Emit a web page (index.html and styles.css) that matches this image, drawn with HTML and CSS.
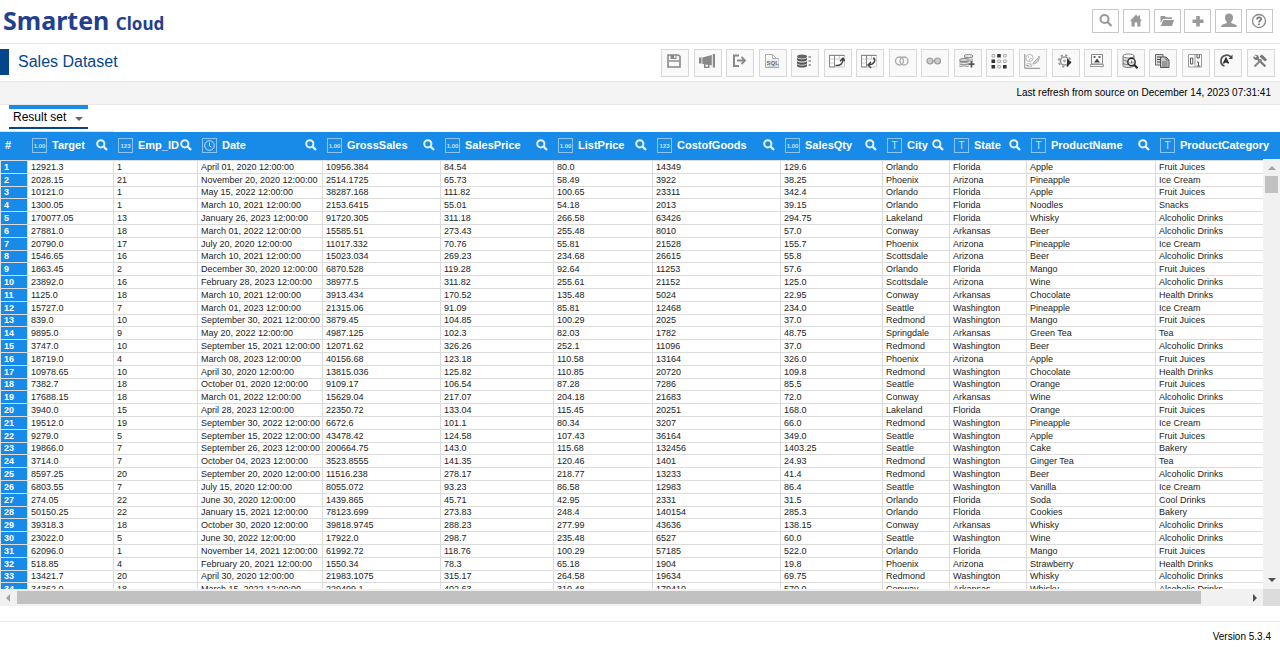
FILE: index.html
```html
<!DOCTYPE html>
<html lang="en">
<head>
    <meta charset="UTF-8">
    <meta name="viewport" content="width=device-width, initial-scale=1.0">
    <title>Smarten Cloud - Sales Dataset</title>
    <link rel="stylesheet" href="styles.css">
</head>
<body>
    <header class="topbar">
        <a class="logo" href="#">Smarten <span>Cloud</span></a>
        <nav class="mainNav">
            <button title="Search"><svg viewBox="0 0 16 16"><circle cx="6.5" cy="6" r="4" fill="none" stroke="#999" stroke-width="2"/><path d="M9.5 9l4 4" stroke="#999" stroke-width="2.4"/></svg></button>
            <button title="Home"><svg viewBox="0 0 16 16"><path fill="#999" d="M8 1.500L2 8h1.500v5.500h3.200V9.500h2.600v4h3.200V8H14l-2-2.200V2.500h-1.800v1.400z"/></svg></button>
            <button title="Open"><svg viewBox="0 0 16 16"><path fill="#999" d="M1.500 6V3h4.500l1 1.200h6V6H4L1.500 10zM4.300 7H15l-2 6H1.800z"/></svg></button>
            <button title="New"><svg viewBox="0 0 16 16"><path fill="#999" d="M6.200 3h3.600v3.500H13.500V10H9.800v3.500H6.200V10H2.500V6.500h3.700z"/></svg></button>
            <button title="User"><svg viewBox="0 0 16 16"><path fill="#999" d="M8 .5c2.600 0 4.200 1.700 4 4.400-.1 1.700-.9 3-1.800 3.900v1.300l4 1.300c1.100.4 1.600 1 1.600 2.600H.2c0-1.600.5-2.200 1.600-2.600l4-1.300V8.800C4.900 7.900 4.100 6.600 4 4.900 3.800 2.200 5.400.5 8 .5z"/></svg></button>
            <button title="Help"><svg viewBox="0 0 16 16"><circle cx="8" cy="8" r="6.500" fill="none" stroke="#888" stroke-width="1.300"/><path d="M6 6.400c0-2.800 4.200-2.600 4.200-.3C10.200 7.500 8 7.500 8 9.400" fill="none" stroke="#777" stroke-width="1.700"/><path d="M7.100 10.500h1.800v1.600H7.100z" fill="#777"/></svg></button>
        </nav>
    </header>

    <div class="titlebar">
        <h1>Sales Dataset</h1>
        <div class="toolbar">
            <button title="Save"><svg viewBox="0 0 16 16"><path d="M2 2h10.500L14 3.500V14H2z" fill="none" stroke="#888" stroke-width="1.600"/><path d="M4.500 2h6v4h-6z" fill="#888"/><path d="M8 2.800h1.500v2H8z" fill="#fff"/><path d="M3 8h10" stroke="#888" stroke-width="1.400"/></svg></button>
            <button title="Publish"><svg viewBox="0 0 16 16"><path fill="#888" d="M0 4.500h2.500v6H0zM3.300 4.500L12.800 2v10.500l-2.300-.6V15H5v-3.800l-1.700-.5zM13.800 1H16v13.500h-2.200z"/><path d="M6.500 11.500v2H9v-1.600z" fill="#fff"/></svg></button>
            <button title="Export"><svg viewBox="0 0 16 16"><path d="M8 2.500H3v10.500h5" fill="none" stroke="#888" stroke-width="2"/><path d="M6 7.500h7" stroke="#888" stroke-width="2"/><path d="M10.500 4L14 7.500 10.500 11" fill="none" stroke="#888" stroke-width="1.800"/></svg></button>
            <button title="SQL"><svg viewBox="0 0 16 16"><path d="M1.500 14.500V1.500H8.500l4 4h2v9z" fill="#fff" stroke="#aaa"/><path d="M8.500 1.500v4h4M2.500 13h11" fill="none" stroke="#aaa"/><path d="M2.500 6h12v6.500h-12z" fill="#eee"/><text x="2.500" y="11.500" font-size="6" font-weight="bold" fill="#666">SQL</text></svg></button>
            <button title="Data"><svg viewBox="0 0 16 16"><ellipse cx="6" cy="3.500" rx="5" ry="2" fill="#666"/><path d="M1 4.700c1.500 2 8.500 2 10 0v2.400c-1.500 2-8.500 2-10 0zM1 8c1.500 2 8.500 2 10 0v2.200c-1.500 2-8.500 2-10 0zM1 11c1.500 2 8.500 2 10 0v2c-1.500 2-8.500 2-10 0z" fill="#555"/><path d="M12.500 4H15M12.500 8H15M12.500 12H15" stroke="#888" stroke-width="1.600"/></svg></button>
            <button title="Pivot"><svg viewBox="0 0 16 16"><path d="M.5 2h15v12H.5zM.5 6h15M.5 10h5M5.500 2v12M10.500 2v4" fill="#fff" stroke="#ccc"/><path d="M.5 2.500h15M5.500 2v12H.5V2" fill="none" stroke="#888"/><path d="M6.500 12.500c5 .5 7.500-2 7.500-6.500M11 8.200l3-3 2 3" fill="none" stroke="#444" stroke-width="1.500"/></svg></button>
            <button title="Unpivot"><svg viewBox="0 0 16 16"><path d="M.5 2h15v12H.5zM.5 6h15M.5 10h5M5.500 2v12M10.500 2v4" fill="#fff" stroke="#ccc"/><path d="M.5 2.500h15M5.500 2v12H.5V2" fill="none" stroke="#888"/><path d="M12.500 4.500c2.500 3 1 7-5 7.500M10 9l-3 3 3 3" fill="none" stroke="#444" stroke-width="1.500"/></svg></button>
            <button title="Join"><svg viewBox="0 0 16 16"><circle cx="5.500" cy="8" r="4" fill="none" stroke="#aaa" stroke-width="1.300"/><circle cx="10" cy="8" r="4" fill="none" stroke="#aaa" stroke-width="1.300"/></svg></button>
            <button title="Union"><svg viewBox="0 0 16 16"><circle cx="4" cy="8" r="3" fill="#ccc" stroke="#999" stroke-width="1.200"/><circle cx="11.500" cy="8" r="3" fill="#ccc" stroke="#999" stroke-width="1.200"/><path d="M7 8h1.500" stroke="#999" stroke-width="1.200"/></svg></button>
            <button title="Add data"><svg viewBox="0 0 16 16"><path d="M5 3v6h9V3z" fill="#bbb"/><path d="M.5 6.500v7.500h9V6.500z" fill="#999"/><ellipse cx="9.500" cy="3" rx="4.500" ry="1.500" fill="#eee" stroke="#888"/><ellipse cx="5" cy="7" rx="4.400" ry="1.400" fill="#eee" stroke="#777"/><path d="M.5 9.500c2 1.400 7 1.400 9 0M.5 12c2 1.400 7 1.400 9 0M10 6c2 0 3-.3 4-1" fill="none" stroke="#eee"/><path d="M12.500 8v6.500M9.500 11.200h6" stroke="#555" stroke-width="1.800"/></svg></button>
            <button title="Matrix"><svg viewBox="0 0 16 16"><path d="M6.200 1h3.600v3.400H6.200zM.5 6.500h3.600v3.400H.5zM.5 12h3.600v3.400H.5zM12 12h3.600v3.400H12z" fill="#333"/><path d="M1 1.500h2.700v2.500H1zM12.500 1.500h2.700v2.500h-2.700zM6.700 7h2.700v2.500H6.700zM12.500 7h2.700v2.500h-2.700zM6.700 12.500h2.700V15H6.700z" fill="none" stroke="#aaa"/></svg></button>
            <button title="Clusters"><svg viewBox="0 0 16 16"><path d="M.8 1v14.300H16" fill="none" stroke="#888"/><circle cx="5.500" cy="5" r="3.600" fill="none" stroke="#bbb"/><path d="M4 4h1M6.500 5.500h1M5 7h1M3 12.500h1.500M5.500 11H7M6.500 13H8" stroke="#888"/><ellipse cx="5" cy="12" rx="3" ry="1.700" fill="none" stroke="#ccc"/><path d="M9 11c0-2 2-2.500 3-4s3-2 3-4c1 4-2 8-6 8z" fill="#ccc" stroke="#aaa"/></svg></button>
            <button title="Process"><svg viewBox="0 0 16 16"><circle cx="7.500" cy="8" r="5.800" fill="none" stroke="#999" stroke-width="1.800" stroke-dasharray="2.300 2.250"/><circle cx="7.500" cy="8" r="4" fill="none" stroke="#999" stroke-width="1.600"/><circle cx="7.500" cy="8" r="1.400" fill="#aaa"/><path d="M10 5.500l4.500 4-4.500 4.500z" fill="#333"/></svg></button>
            <button title="Preview"><svg viewBox="0 0 16 16"><path d="M2.500 1.500h11v9.500h-11z" fill="#fff" stroke="#888"/><path d="M1.500 11.500h13v2h-13z" fill="#fff" stroke="#999"/><path d="M5 9.500l3-4 3 4z" fill="#444"/><path d="M4.500 3h2v2h-2zM9.500 3h2v2h-2z" fill="#666"/></svg></button>
            <button title="Search data"><svg viewBox="0 0 16 16"><path d="M1 3v10c1 2 9 2 11 0V3z" fill="#ddd" stroke="#777"/><ellipse cx="6.500" cy="3" rx="5.500" ry="2" fill="#fff" stroke="#777"/><path d="M1 6.500c1 1.500 5 2 8 1.200M1 10c1 1.500 3 1.500 5 1.500" fill="none" stroke="#777"/><circle cx="9.500" cy="9" r="3.700" fill="#fff" stroke="#222" stroke-width="1.400"/><path d="M12.200 11.700l3.300 3.500" stroke="#222" stroke-width="2"/><path d="M8 10.500V9M9.500 10.500v-3M11 10.500V8.500" stroke="#777"/></svg></button>
            <button title="Copy"><svg viewBox="0 0 16 16"><path d="M1.500 1.500H9V12H1.500z" fill="#ddd" stroke="#666"/><path d="M3 4h4M3 6.500h3M3 9h3" stroke="#444"/><path d="M6.500 4h5.500l3 3v7.500H6.500z" fill="#ccc" stroke="#555"/><path d="M12 4v3h3M8 9h5.500M8 11h5.500M8 13h5.500" fill="none" stroke="#666"/></svg></button>
            <button title="Binary"><svg viewBox="0 0 16 16"><path d="M1.500 1.500h13v12.500h-13zM8 1.500V14" fill="#fff" stroke="#999"/><path d="M3.500 5h2.300v6H3.500z" fill="none" stroke="#555"/><path d="M10 1.500V5h2.300V1.500M10 9h1.500v4M9.800 13h3.400" fill="none" stroke="#555"/></svg></button>
            <button title="Refresh"><svg viewBox="0 0 16 16"><path d="M5.500 13C.5 11.500.8 3.500 6.500 2.300c2.500-.4 4 .2 5.300 1.600" fill="none" stroke="#555" stroke-width="1.800"/><path d="M9.500 6H13.500V1.500z" fill="#444"/><path d="M4.500 10.500L7 5.500l2.500 5M5.500 9h3" fill="none" stroke="#222" stroke-width="1.600"/></svg></button>
            <button title="Settings"><svg viewBox="0 0 16 16"><path d="M4.500 4.500l8.800 9" stroke="#777" stroke-width="2.200"/><path d="M2.500 13.500l7-7" stroke="#888" stroke-width="2.200"/><path d="M2 2c2-1 5 0 5 3L4.500 7C2 7 1 5 1.500 3l2 1.500 1-.5V3z" fill="#777"/><path d="M7.500 3.500L10 1.500l5 5L13 8.500z" fill="#777"/></svg></button>
        </div>
    </div>

    <div class="refreshBar">Last refresh from source on December 14, 2023 07:31:41</div>

    <div class="tabs">
        <button class="tab">Result set <span class="caret"></span></button>
    </div>

    <main class="grid">
        <table>
            <colgroup>
                <col class="colNum"><col class="colTarget"><col class="colEmp"><col class="colDate">
                <col class="colGross"><col class="colPrice"><col class="colList"><col class="colCost">
                <col class="colQty"><col class="colCity"><col class="colState"><col class="colName"><col>
            </colgroup>
            <thead><tr id="headRow"><th>#</th></tr></thead>
            <tbody id="rows"></tbody>
        </table>
        <div class="vScroll">
            <span class="arrowUp"></span>
            <span class="vThumb"></span>
            <span class="arrowDown"></span>
        </div>
    </main>
    <div class="hScroll">
        <span class="arrowLeft"></span>
        <span class="hTrack"><span class="hThumb"></span></span>
        <span class="arrowRight"></span>
        <span class="corner"></span>
    </div>

    <footer>Version 5.3.4</footer>
    <script src="script.js"></script>
</body>
</html>
```
FILE: styles.css
```css
*{
    box-sizing: border-box;
}
body{
    margin: 0px;
    height: 100vh;
    display: flex;
    flex-direction: column;
    overflow: hidden;
    background-color: white;
    color: black;
    font-family: "Liberation Sans", Arial, sans-serif;
    font-size: 10px;
}
button{
    font-family: inherit;
    padding: 0px;
    cursor: pointer;
}
.topbar{
    display: flex;
    justify-content: space-between;
    height: 44px;
    flex: none;
    padding: 0px 7px 0px 3px;
    border-bottom: 1px solid #e8e8e8;
}
.logo{
    color: #23408f;
    font-family: "Noto Sans", "Open Sans", sans-serif;
    font-size: 25px;
    font-weight: 700;
    line-height: 41px;
    text-decoration: none;
}
.logo span{
    font-size: 17px;
}
.mainNav{
    display: flex;
    justify-content: space-between;
    width: 181px;
    padding-top: 9px;
}
.mainNav button{
    width: 27px;
    height: 24px;
    background-color: white;
    border: 1px solid #c8c8c8;
}
.mainNav svg{
    display: block;
    width: 16px;
    height: 16px;
    margin: 0px auto;
}
.titlebar{
    display: flex;
    justify-content: space-between;
    flex: none;
    height: 38px;
    padding: 5px 5px 0px 0px;
    border-bottom: 1px solid #e8e8e8;
}
h1{
    margin: 0px;
    height: 26px;
    padding-left: 9px;
    border-left: 9px solid #04468c;
    color: #04468c;
    font-size: 16px;
    font-weight: normal;
    line-height: 25px;
}
.toolbar{
    display: flex;
    justify-content: space-between;
    width: 614px;
}
.toolbar button{
    width: 28px;
    height: 28px;
    padding: 0px 2px 4px 0px;
    background-color: #f9f9f9;
    border: 1px solid #d8d8d8;
}
.toolbar svg{
    display: block;
    width: 16px;
    height: 16px;
    margin: 0px auto;
}
.refreshBar{
    flex: none;
    height: 23px;
    padding-right: 9px;
    background-color: #f4f4f4;
    border-bottom: 1px solid #e8e8e8;
    line-height: 22px;
    text-align: right;
}
.tabs{
    flex: none;
    width: 114px;
    height: 27px;
    padding-left: 9px;
    border-bottom: 1px solid #e0e0e0;
}
.tab{
    display: flex;
    align-items: center;
    width: 79px;
    height: 24px;
    padding: 0px 4px 2px;
    background-color: white;
    border: none;
    border-top: 4px solid #188ae8;
    border-bottom: 2px solid #04468c;
    font-size: 12px;
    color: black;
}
.caret{
    margin: 4px 0px 0px 9px;
    border: 4px solid transparent;
    border-top: 4px solid #666;
    border-bottom: none;
}
.grid{
    position: relative;
    flex: 1;
    min-height: 0px;
    overflow: hidden;
}
table{
    width: 100%;
    table-layout: fixed;
    border-collapse: separate;
    border-spacing: 0px;
}
.colNum{ width: 27px; }
.colTarget{ width: 86px; }
.colEmp{ width: 84px; }
.colDate{ width: 125px; }
.colGross{ width: 118px; }
.colPrice{ width: 113px; }
.colList{ width: 99px; }
.colCost{ width: 128px; }
.colQty{ width: 102px; }
.colCity{ width: 67px; }
.colState{ width: 77px; }
.colName{ width: 129px; }
thead th{
    height: 29px;
    padding: 0px 5px 2px;
    background-color: #188ae8;
    border-bottom: 1px solid #dcdcdc;
    color: white;
    font-size: 11px;
    text-align: left;
}
.headCell{
    display: flex;
    align-items: center;
}
.type{
    flex: none;
    width: 15px;
    height: 15px;
    margin-right: 5px;
    border: 1px solid #8cc4f4;
    color: #c8e4fc;
    font-size: 6px;
    line-height: 14px;
    text-align: center;
}
.typeText{
    font-size: 10px;
    font-weight: normal;
}
.type svg{
    display: block;
    width: 13px;
    height: 13px;
}
.find{
    margin-left: auto;
    background: none;
    border: none;
}
.find svg{
    display: block;
    width: 12px;
    height: 12px;
}
tbody th, tbody td{
    height: 13px;
    padding: 0px 0px 0px 3px;
    border-bottom: 1px solid #dcdcdc;
    border-left: 1px solid #dcdcdc;
    color: #222;
    font-size: 9px;
    line-height: 11px;
    text-align: left;
    white-space: nowrap;
}
/* every fifth row is one pixel shorter */
tbody tr:nth-child(5n+3) > *{
    height: 12px;
}
tbody th{
    background-color: #188ae8;
    color: white;
}
.vScroll{
    position: absolute;
    top: 27px;
    right: 0px;
    bottom: 0px;
    width: 17px;
    display: flex;
    flex-direction: column;
    align-items: center;
    background-color: #f1f1f1;
}
.vThumb{
    width: 13px;
    height: 17px;
    background-color: #c1c1c1;
}
.arrowUp, .arrowDown{
    border: 4px solid transparent;
}
.arrowUp{
    margin: 3px 0px 6px;
    border-bottom-color: #a3a3a3;
}
.arrowDown{
    margin: auto 0px 3px;
    border-top-color: #505050;
}
.hScroll{
    display: flex;
    align-items: center;
    flex: none;
    height: 17px;
    background-color: #f1f1f1;
}
.arrowLeft, .arrowRight{
    border: 4px solid transparent;
}
.arrowLeft{
    margin: 0px 7px 0px 2px;
    border-right-color: #a3a3a3;
}
.arrowRight{
    margin: 0px 2px 0px 7px;
    border-left-color: #505050;
}
.hTrack{
    flex: 1;
    height: 13px;
    padding-right: 45px;
}
.hThumb{
    display: block;
    height: 13px;
    background-color: #c1c1c1;
}
.corner{
    width: 17px;
    height: 17px;
    background-color: #dcdcdc;
}
footer{
    flex: none;
    height: 26px;
    margin-top: 15px;
    padding-right: 9px;
    border-top: 1px solid #e8e8e8;
    line-height: 30px;
    text-align: right;
}
```
FILE: script.js
```js
const headRow = document.getElementById("headRow")
const rows = document.getElementById("rows")

const columns = [
    ["Target", "1.00"], ["Emp_ID", "123"], ["Date", "date"], ["GrossSales", "1.00"],
    ["SalesPrice", "1.00"], ["ListPrice", "1.00"], ["CostofGoods", "123"], ["SalesQty", "1.00"],
    ["City", "T"], ["State", "T"], ["ProductName", "T"], ["ProductCategory", "T"]
]
const clock = `<svg viewBox="0 0 13 13"><circle cx="6.5" cy="6.5" r="4.8" fill="none" stroke="#c8e4fc"/><path d="M6.500 3.500v3.500l2 1" fill="none" stroke="#c8e4fc"/></svg>`
const glass = `<svg viewBox="0 0 12 12"><circle cx="4.800" cy="4.800" r="3.600" fill="none" stroke="#e4f2fe" stroke-width="2"/><path d="M7.500 7.500l3.500 3.500" stroke="#e4f2fe" stroke-width="2.400"/></svg>`

const data = `12921.3|1|April 01, 2020|10956.384|84.54|80.0|14349|129.6|Orlando|Florida|Apple|Fruit Juices
2028.15|21|November 20, 2020|2514.1725|65.73|58.49|3922|38.25|Phoenix|Arizona|Pineapple|Ice Cream
10121.0|1|May 15, 2022|38287.168|111.82|100.65|23311|342.4|Orlando|Florida|Apple|Fruit Juices
1300.05|1|March 10, 2021|2153.6415|55.01|54.18|2013|39.15|Orlando|Florida|Noodles|Snacks
170077.05|13|January 26, 2023|91720.305|311.18|266.58|63426|294.75|Lakeland|Florida|Whisky|Alcoholic Drinks
27881.0|18|March 01, 2022|15585.51|273.43|255.48|8010|57.0|Conway|Arkansas|Beer|Alcoholic Drinks
20790.0|17|July 20, 2020|11017.332|70.76|55.81|21528|155.7|Phoenix|Arizona|Pineapple|Ice Cream
1546.65|16|March 10, 2021|15023.034|269.23|234.68|26615|55.8|Scottsdale|Arizona|Beer|Alcoholic Drinks
1863.45|2|December 30, 2020|6870.528|119.28|92.64|11253|57.6|Orlando|Florida|Mango|Fruit Juices
23892.0|16|February 28, 2023|38977.5|311.82|255.61|21152|125.0|Scottsdale|Arizona|Wine|Alcoholic Drinks
1125.0|18|March 10, 2021|3913.434|170.52|135.48|5024|22.95|Conway|Arkansas|Chocolate|Health Drinks
15727.0|7|March 01, 2023|21315.06|91.09|85.81|12468|234.0|Seattle|Washington|Pineapple|Ice Cream
839.0|10|September 30, 2021|3879.45|104.85|100.29|2025|37.0|Redmond|Washington|Mango|Fruit Juices
9895.0|9|May 20, 2022|4987.125|102.3|82.03|1782|48.75|Springdale|Arkansas|Green Tea|Tea
3747.0|10|September 15, 2021|12071.62|326.26|252.1|11096|37.0|Redmond|Washington|Beer|Alcoholic Drinks
18719.0|4|March 08, 2023|40156.68|123.18|110.58|13164|326.0|Phoenix|Arizona|Apple|Fruit Juices
10978.65|10|April 30, 2020|13815.036|125.82|110.85|20720|109.8|Redmond|Washington|Chocolate|Health Drinks
7382.7|18|October 01, 2020|9109.17|106.54|87.28|7286|85.5|Seattle|Washington|Orange|Fruit Juices
17688.15|18|March 01, 2022|15629.04|217.07|204.18|21683|72.0|Conway|Arkansas|Wine|Alcoholic Drinks
3940.0|15|April 28, 2023|22350.72|133.04|115.45|20251|168.0|Lakeland|Florida|Orange|Fruit Juices
19512.0|19|September 30, 2022|6672.6|101.1|80.34|3207|66.0|Redmond|Washington|Pineapple|Ice Cream
9279.0|5|September 15, 2022|43478.42|124.58|107.43|36164|349.0|Seattle|Washington|Apple|Fruit Juices
19866.0|7|September 26, 2023|200664.75|143.0|115.68|132456|1403.25|Seattle|Washington|Cake|Bakery
3714.0|7|October 04, 2023|3523.8555|141.35|120.46|1401|24.93|Redmond|Washington|Ginger Tea|Tea
8597.25|20|September 20, 2020|11516.238|278.17|218.77|13233|41.4|Redmond|Washington|Beer|Alcoholic Drinks
6803.55|7|July 15, 2020|8055.072|93.23|86.58|12983|86.4|Seattle|Washington|Vanilla|Ice Cream
274.05|22|June 30, 2020|1439.865|45.71|42.95|2331|31.5|Orlando|Florida|Soda|Cool Drinks
50150.25|22|January 15, 2021|78123.699|273.83|248.4|140154|285.3|Orlando|Florida|Cookies|Bakery
39318.3|18|October 30, 2020|39818.9745|288.23|277.99|43636|138.15|Conway|Arkansas|Whisky|Alcoholic Drinks
23022.0|5|June 30, 2022|17922.0|298.7|235.48|6527|60.0|Seattle|Washington|Wine|Alcoholic Drinks
62096.0|1|November 14, 2021|61992.72|118.76|100.29|57185|522.0|Orlando|Florida|Mango|Fruit Juices
518.85|4|February 20, 2021|1550.34|78.3|65.18|1904|19.8|Phoenix|Arizona|Strawberry|Health Drinks
13421.7|20|April 30, 2020|21983.1075|315.17|264.58|19634|69.75|Redmond|Washington|Whisky|Alcoholic Drinks
34362.0|18|March 15, 2022|229499.1|402.63|310.48|179410|570.0|Conway|Arkansas|Whisky|Alcoholic Drinks`

columns.forEach(([name, type], i) => {
    const icon = type === "date" ? clock : type
    const find = i < columns.length - 1 ? `<button class="find" title="Search ${name}">${glass}</button>` : ""
    const cls = type === "T" ? "type typeText" : "type"
    headRow.innerHTML += `<th><div class="headCell"><span class="${cls}">${icon}</span>${name}${find}</div></th>`
})

rows.innerHTML = data.split("\n").map((line, i) => {
    const cells = line.split("|")
    cells[2] += " 12:00:00"
    return `<tr><th>${i + 1}</th>${cells.map(c => `<td>${c}</td>`).join("")}</tr>`
}).join("")
```
